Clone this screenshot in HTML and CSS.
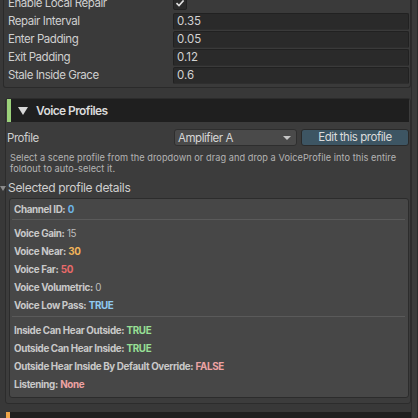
FILE: index.html
```html
<!DOCTYPE html>
<html>
<head>
<meta charset="utf-8">
<link rel="stylesheet" href="styles.css">
</head>
<body>
<div class="window">
  <div class="main">
    <div class="topbox">
      <div class="row"><span class="label">Enable Local Repair</span><span class="check"><svg width="10" height="10" viewBox="0 0 10 10"><path d="M1.5 5.2 L4 7.6 L8.6 2.4" fill="none" stroke="#e0e0e0" stroke-width="1.6"/></svg></span></div>
      <div class="row"><span class="label">Repair Interval</span><span class="field">0.35</span></div>
      <div class="row"><span class="label">Enter Padding</span><span class="field">0.05</span></div>
      <div class="row"><span class="label">Exit Padding</span><span class="field">0.12</span></div>
      <div class="row"><span class="label">Stale Inside Grace</span><span class="field">0.6</span></div>
    </div>

    <div class="section">
      <div class="header green"><span class="tri"></span><span class="htitle">Voice Profiles</span></div>
      <div class="row profile-row">
        <span class="label">Profile</span>
        <span class="dropdown"><span>Amplifier A</span><span class="arrow"></span></span>
        <span class="button">Edit this profile</span>
      </div>
      <p class="help">Select a scene profile from the dropdown or drag and drop a VoiceProfile into this entire foldout to auto-select it.</p>
      <div class="subfold"><span class="subtri"></span>Selected profile details</div>
      <div class="details">
        <div class="drow"><b>Channel ID:</b> <span class="blue">0</span></div>
        <div class="sep"></div>
        <div class="drow"><b>Voice Gain:</b> <span class="plain">15</span></div>
        <div class="drow"><b>Voice Near:</b> <span class="orange">30</span></div>
        <div class="drow"><b>Voice Far:</b> <span class="red">50</span></div>
        <div class="drow"><b>Voice Volumetric:</b> <span class="plain">0</span></div>
        <div class="drow"><b>Voice Low Pass:</b> <span class="lblue">TRUE</span></div>
        <div class="sep sep2"></div>
        <div class="drow"><b>Inside Can Hear Outside:</b> <span class="green">TRUE</span></div>
        <div class="drow"><b>Outside Can Hear Inside:</b> <span class="green">TRUE</span></div>
        <div class="drow"><b>Outside Hear Inside By Default Override:</b> <span class="pink">FALSE</span></div>
        <div class="drow"><b>Listening:</b> <span class="pink">None</span></div>
      </div>
    </div>

    <div class="header orange-bar"></div>
  </div>
  <div class="scroll"></div>
</div>
</body>
</html>
```

FILE: styles.css
```css
html, body {
  margin: 0;
  padding: 0;
  background: #383838;
  width: 418px;
  height: 418px;
  overflow: hidden;
  font-family: Inter, "Noto Sans", sans-serif;
  color: #c8c8c8;
}

.window {
  display: flex;
  height: 418px;
}

.main {
  width: 411px;
  display: flex;
  flex-direction: column;
}

.scroll {
  width: 5px;
  border-left: 1px solid #2c2c2c;
  border-right: 1px solid #2c2c2c;
  background: #3b3b3b;
}

.topbox {
  margin: -6px 0 0 3px;
  border: 1px solid #2a2a2a;
  border-top: none;
  border-radius: 0 0 3px 3px;
  padding: 0 1px 3px 4px;
  background: #3a3a3a;
}

.row {
  display: flex;
  align-items: center;
  height: 18px;
  font-size: 11.5px;
  letter-spacing: -0.45px;
}

.label {
  width: 165px;
  flex: none;
  color: #cfcfcf;
}

.check {
  width: 12px;
  height: 12px;
  background: #2a2a2a;
  border: 1px solid #222;
  border-radius: 2px;
  display: flex;
  align-items: center;
  justify-content: center;
  margin-top: -1px;
}

.field {
  flex: 1;
  height: 15px;
  line-height: 15px;
  background: #2a2a2a;
  border: 1px solid #212121;
  border-bottom-color: #2e2e2e;
  border-radius: 2px;
  padding-left: 3px;
  color: #d2d2d2;
  letter-spacing: 0;
}

.section {
  margin: 10px 0 0 5px;
  border: 1px solid #2c2c2c;
  border-radius: 3px;
  background: #3c3c3c;
  padding: 0 1px 5px 0;
  display: flex;
  flex-direction: column;
}

.header {
  height: 23px;
  background: #1f1f1f;
  display: flex;
  align-items: center;
}

.header.green {
  border-left: 4px solid #9bd17a;
  margin-left: 1px;
}

.tri {
  width: 0;
  height: 0;
  border-left: 5px solid transparent;
  border-right: 5px solid transparent;
  border-top: 8px solid #d8d8d8;
  margin: 1px 8px 0 7px;
}

.htitle {
  font-size: 12px;
  font-weight: 600;
  letter-spacing: -0.6px;
  color: #dadada;
}

.profile-row {
  margin: 7px 0 0 1px;
  height: 17px;
}

.profile-row .label {
  width: 167px;
}

.dropdown {
  width: 113px;
  height: 15px;
  background: #4a4a4a;
  border: 1px solid #2e2e2e;
  border-radius: 3px;
  display: flex;
  align-items: center;
  justify-content: space-between;
  padding: 0 5px 0 3px;
  color: #d6d6d6;
}

.arrow {
  width: 0;
  height: 0;
  border-left: 4px solid transparent;
  border-right: 4px solid transparent;
  border-top: 4px solid #c6c6c6;
}

.button {
  margin-left: 4px;
  flex: 1;
  height: 15px;
  line-height: 15px;
  background: #3d5563;
  border: 1px solid #2a2a2a;
  border-radius: 3px;
  text-align: center;
  color: #dcdcdc;
}

.help {
  margin: 6px 0 0 4px;
  font-size: 9.2px;
  line-height: 11px;
  color: #b4b4b4;
  letter-spacing: 0.05px;
  width: 400px;
}

.subfold {
  position: relative;
  margin: 6px 0 0 2px;
  height: 16px;
  line-height: 16px;
  font-size: 12px;
  letter-spacing: -0.3px;
  color: #cfcfcf;
}

.subtri {
  position: absolute;
  left: -8px;
  top: 6px;
  width: 0;
  height: 0;
  border-left: 3px solid transparent;
  border-right: 3px solid transparent;
  border-top: 5px solid #8a8a8a;
}

.details {
  margin: 2px 0 0 3px;
  border: 1px solid #2c2c2c;
  border-radius: 3px;
  background: #474747;
  padding: 2px 2px 3px 4px;
}

.drow {
  height: 18px;
  line-height: 18px;
  font-size: 9.8px;
  letter-spacing: -0.35px;
  color: #c4c4c4;
  white-space: nowrap;
}

.drow b {
  font-weight: 700;
  color: #c9c9c9;
}

.sep {
  height: 1px;
  background: #5a5a5a;
  margin: 0 1px 5px -2px;
}

.sep2 {
  margin-top: 1px;
}

.blue { color: #6cb4e6; font-weight: 700; }
.plain { color: #bdbdbd; }
.orange { color: #f0b45a; font-weight: 700; }
.red { color: #e96a6a; font-weight: 700; }
.lblue { color: #8fcaf2; font-weight: 700; }
.green { color: #98e096; font-weight: 700; }
.pink { color: #eda3a3; font-weight: 700; }

.header.orange-bar {
  margin: 8px 0 0 6px;
  border-left: 4px solid #f0a648;
  flex: none;
}
```
